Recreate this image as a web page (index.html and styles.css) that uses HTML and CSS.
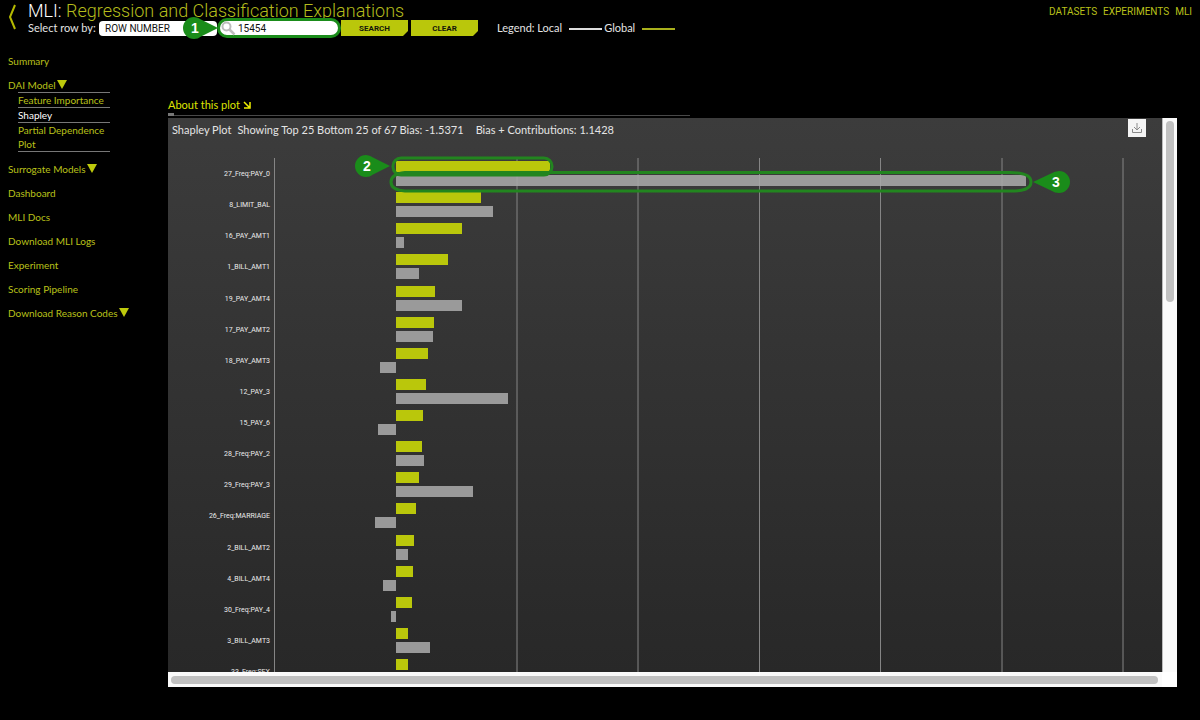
FILE: index.html
```html
<!DOCTYPE html>
<html lang="en">
<head>
<meta charset="utf-8">
<title>MLI: Regression and Classification Explanations</title>
<link rel="stylesheet" href="styles.css">
</head>
<body>
<header class="header">
  <a class="back" href="#" aria-label="Back"><svg width="9" height="26" viewBox="0 0 9 26"><path d="M7 1 2 13l5 12" fill="none" stroke="#b4b900" stroke-width="2"/></svg></a>
  <div class="heading">
    <h1 class="title">MLI: <span class="accent">Regression and Classification Explanations</span></h1>
    <form class="toolbar">
      <label class="row-label" for="row-by">Select row by:</label>
      <select class="row-select" id="row-by"><option>ROW NUMBER</option></select>
      <div class="search">
        <svg class="marker" width="37" height="24" viewBox="0 0 37 24"><path d="M36 12 19 3.500Q16 1 12 1A11 11 0 0 0 12 23Q16 23 19 20.500Z" fill="#1a8c1a"/><text class="marker-text" x="13" y="17">1</text></svg>
        <svg class="magnifier" width="15" height="15" viewBox="0 0 15 15"><circle cx="5.500" cy="5.500" r="4" fill="none" stroke="#bdbdbd" stroke-width="2"/><path d="m8.500 8.500 5 5" stroke="#bdbdbd" stroke-width="2.500"/></svg>
        <input class="search-input" type="text" value="15454" aria-label="Row number">
      </div>
      <button class="btn" type="button">SEARCH</button>
      <button class="btn" type="button">CLEAR</button>
      <div class="legend"><span>Legend: Local</span><i class="key key-local"></i><span>Global</span><i class="key key-global"></i></div>
    </form>
  </div>
  <nav class="top-nav"><a href="#">DATASETS</a><a href="#">EXPERIMENTS</a><a href="#">MLI</a></nav>
</header>
<div class="page">
  <nav class="sidebar">
    <a href="#">Summary</a>
    <div>
      <a class="expand" href="#">DAI Model</a>
      <div class="submenu">
        <a href="#">Feature Importance</a>
        <a class="current" href="#">Shapley</a>
        <a href="#">Partial Dependence Plot</a>
      </div>
    </div>
    <a class="expand" href="#">Surrogate Models</a>
    <a href="#">Dashboard</a>
    <a href="#">MLI Docs</a>
    <a href="#">Download MLI Logs</a>
    <a href="#">Experiment</a>
    <a href="#">Scoring Pipeline</a>
    <a class="expand" href="#">Download Reason Codes</a>
  </nav>
  <main class="main">
    <a class="about" href="#">About this plot <svg width="8" height="8" viewBox="0 0 8 8"><path d="m1 1 5 5M7 1v6H1" fill="none" stroke="#f0f000" stroke-width="1.500"/></svg></a>
    <div class="about-rule"></div>
    <section class="panel">
      <div class="chart">
        <div class="chart-title"><span>Shapley Plot</span><span>Showing Top 25 Bottom 25 of 67 Bias: -1.5371</span><span class="contrib">Bias + Contributions: 1.1428</span></div>
        <button class="download" type="button" aria-label="Download"><svg width="12" height="12" viewBox="0 0 12 12"><path d="M6 1v7M3 5l3 3 3-3M1.500 7v3.500h9V7" fill="none" stroke="#8a8a8a"/></svg></button>
        <svg class="plot" width="994" height="1600">
          <path class="grid" d="M106.500 40V1600M349 40V1600M470 40V1600M591.500 40V1600M712.500 40V1600M834 40V1600M955 40V1600"/>
          <g transform="translate(0 43)"><text x="102" y="15">27_Freq:PAY_0</text><rect class="g" x="228" width="154" height="11"/><rect class="l" x="228" y="14" width="630" height="11"/></g>
          <g transform="translate(0 74)"><text x="102" y="15">8_LIMIT_BAL</text><rect class="g" x="228" width="85" height="11"/><rect class="l" x="228" y="14" width="97" height="11"/></g>
          <g transform="translate(0 105)"><text x="102" y="15">16_PAY_AMT1</text><rect class="g" x="228" width="66" height="11"/><rect class="l" x="228" y="14" width="8" height="11"/></g>
          <g transform="translate(0 136)"><text x="102" y="15">1_BILL_AMT1</text><rect class="g" x="228" width="52" height="11"/><rect class="l" x="228" y="14" width="23" height="11"/></g>
          <g transform="translate(0 168)"><text x="102" y="15">19_PAY_AMT4</text><rect class="g" x="228" width="39" height="11"/><rect class="l" x="228" y="14" width="66" height="11"/></g>
          <g transform="translate(0 199)"><text x="102" y="15">17_PAY_AMT2</text><rect class="g" x="228" width="38" height="11"/><rect class="l" x="228" y="14" width="37" height="11"/></g>
          <g transform="translate(0 230)"><text x="102" y="15">18_PAY_AMT3</text><rect class="g" x="228" width="32" height="11"/><rect class="l" x="212" y="14" width="16" height="11"/></g>
          <g transform="translate(0 261)"><text x="102" y="15">12_PAY_3</text><rect class="g" x="228" width="30" height="11"/><rect class="l" x="228" y="14" width="112" height="11"/></g>
          <g transform="translate(0 292)"><text x="102" y="15">15_PAY_6</text><rect class="g" x="228" width="27" height="11"/><rect class="l" x="210" y="14" width="18" height="11"/></g>
          <g transform="translate(0 323)"><text x="102" y="15">28_Freq:PAY_2</text><rect class="g" x="228" width="26" height="11"/><rect class="l" x="228" y="14" width="28" height="11"/></g>
          <g transform="translate(0 354)"><text x="102" y="15">29_Freq:PAY_3</text><rect class="g" x="228" width="23" height="11"/><rect class="l" x="228" y="14" width="77" height="11"/></g>
          <g transform="translate(0 385)"><text x="102" y="15">26_Freq:MARRIAGE</text><rect class="g" x="228" width="20" height="11"/><rect class="l" x="207" y="14" width="21" height="11"/></g>
          <g transform="translate(0 417)"><text x="102" y="15">2_BILL_AMT2</text><rect class="g" x="228" width="18" height="11"/><rect class="l" x="228" y="14" width="12" height="11"/></g>
          <g transform="translate(0 448)"><text x="102" y="15">4_BILL_AMT4</text><rect class="g" x="228" width="17" height="11"/><rect class="l" x="215" y="14" width="13" height="11"/></g>
          <g transform="translate(0 479)"><text x="102" y="15">30_Freq:PAY_4</text><rect class="g" x="228" width="16" height="11"/><rect class="l" x="223" y="14" width="5" height="11"/></g>
          <g transform="translate(0 510)"><text x="102" y="15">3_BILL_AMT3</text><rect class="g" x="228" width="12" height="11"/><rect class="l" x="228" y="14" width="34" height="11"/></g>
          <g transform="translate(0 541)"><text x="102" y="15">33_Freq:SEX</text><rect class="g" x="228" width="12" height="11"/></g>
          <path class="ring" d="M237 54.500H842Q863 54.500 863 64T842 73H237Q223 72 223 64T237 54.500Z"/>
          <rect class="ring" x="225" y="40" width="159" height="17" rx="8"/>
          <path d="M222 48 205 39.500Q202 37 198 37A11 11 0 0 0 198 59Q202 59 205 56.500Z" fill="#1a8c1a"/><text class="marker-text" x="199" y="53">2</text>
          <path d="M865 64 883 55.500Q887 53 891 53A11 11 0 0 1 891 75Q887 75 883 72.500Z" fill="#1a8c1a"/><text class="marker-text" x="888" y="69">3</text>
        </svg>
      </div>
      <div class="bar-v"><div class="thumb-v"></div></div>
      <div class="bar-h"><div class="thumb-h"></div></div>
    </section>
  </main>
</div>
</body>
</html>
```
FILE: styles.css
```css
* { box-sizing: border-box; }
body {
  margin: 0;
  height: 100vh;
  display: flex;
  flex-direction: column;
  background: #000;
  color: #e4e4e4;
  font: 11px/14px Lato, Roboto, sans-serif;
}
a { color: #b9c11a; text-decoration: none; }
.header { display: flex; padding: 2px 8px 0 8px; height: 54px; flex: none; }
.back { width: 20px; flex: none; padding-top: 2px; }
.heading { flex: 1; }
.title { margin: 0; font: 300 18px/18px Roboto, sans-serif; color: #fff; white-space: nowrap; }
.accent { color: #b4bc1c; }
.toolbar { display: flex; align-items: center; height: 16px; white-space: nowrap; }
.row-label { width: 71px; flex: none; }
.row-select {
  appearance: none;
  width: 118px;
  height: 15px;
  border: 0;
  border-radius: 4px;
  padding: 0 6px;
  background: #fff;
  color: #111;
  font: 10px/15px Roboto, sans-serif;
}
.search { position: relative; width: 124px; flex: none; }
.search-input {
  display: block;
  width: 124px;
  height: 20px;
  border: 3px solid #1a8c1a;
  border-radius: 10px;
  padding: 0 0 0 18px;
  background: #fff;
  color: #111;
  font: 10px/14px Roboto, sans-serif;
}
.magnifier { position: absolute; left: 4px; top: 3px; }
.marker { position: absolute; left: -35px; top: -2px; }
.marker-text { font: bold 14px "Liberation Sans", sans-serif; fill: #fff; text-anchor: middle; }
.btn {
  width: 67px;
  height: 16px;
  margin-right: 3px;
  border: 0;
  padding: 0;
  background: #bac70b;
  color: #14160a;
  font: bold 8px/15px Roboto, sans-serif;
  clip-path: polygon(0 0, 100% 0, 100% 11px, 62px 100%, 0 100%);
}
.legend { display: flex; align-items: center; margin-left: 16px; }
.key { height: 2px; width: 33px; margin: 2px 2px 0 7px; }
.key-local { background: #ddd; }
.key-global { background: #a9b01c; }
.top-nav { display: flex; gap: 6px; padding-top: 3px; font: 10px/14px Roboto, sans-serif; }
.page { flex: 1; min-height: 0; display: flex; }
.sidebar { width: 168px; flex: none; padding-left: 8px; display: flex; flex-direction: column; gap: 10px; font-size: 10px; }
.expand { display: flex; align-items: center; }
.expand::after { content: ""; margin-left: 1px; margin-bottom: 2px; border: 5px solid transparent; border-top: 9px solid #bdc90c; border-bottom: 0; }
.submenu { width: 92px; margin-left: 10px; border-bottom: 1px solid #777; }
.submenu a { display: block; border-top: 1px solid #777; }
.submenu .current { color: #fff; }
.main { flex: 1; min-width: 0; margin: 44px 23px 33px 0; display: flex; flex-direction: column; }
.about { color: #dfe400; }
.about-rule { width: 522px; max-width: 100%; height: 3px; margin: 1px 0 2px; background: linear-gradient(#777, #777) 0 0 / 6px 3px no-repeat, linear-gradient(#484848, #484848) 0 2px / 100% 1px no-repeat; }
.panel { flex: 1; min-height: 0; display: grid; grid-template: minmax(0, 1fr) 15px / minmax(0, 1fr) 15px; background: #fff; }
.chart { position: relative; overflow: hidden; background: linear-gradient(#3c3c3c, #282828); }
.chart-title { position: absolute; left: 4px; top: 5px; display: flex; gap: 6px; white-space: nowrap; }
.contrib { margin-left: 6px; }
.download { position: absolute; top: 1px; right: 16px; width: 18px; height: 18px; padding: 0; border: 0; background: #f4f4f4; display: grid; place-items: center; }
.plot { display: block; }
.plot text { font-family: Roboto, sans-serif; font-size: 7px; fill: #ececec; text-anchor: end; }
.plot .marker-text { font: bold 14px "Liberation Sans", sans-serif; fill: #fff; text-anchor: middle; }
.grid { stroke: #858585; stroke-width: 1; }
.g { fill: #bac70b; }
.l { fill: #a8a8a8; fill-opacity: .88; }
.ring { fill: none; stroke: #22851f; stroke-width: 3; }
.bar-v { background: #fafafa; border-left: 1px solid #bbb; padding: 3px; }
.thumb-v { height: 33%; width: 8px; border-radius: 4px; background: #c1c1c1; }
.bar-h { grid-column: 1; background: #fafafa; padding: 4px 4px 0 3px; }
.thumb-h { height: 8px; border-radius: 4px; background: #c1c1c1; }
```
